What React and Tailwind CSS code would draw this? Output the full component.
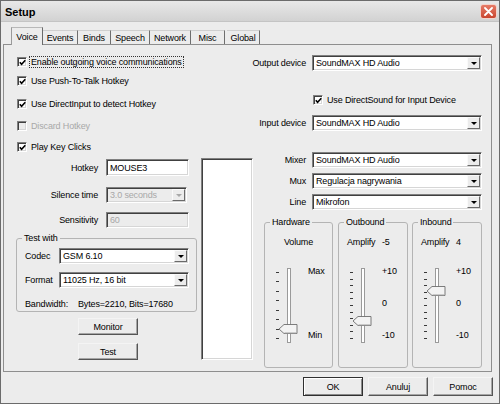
// Setup dialog (Voice tab) — XP silver style

const sunken =
  'border border-t-[#808080] border-l-[#808080] border-b-white border-r-white shadow-[inset_1px_1px_0_#404040,inset_-1px_-1px_0_#d6d6d6]'

function Check({ checked, disabled }) {
  return (
    <span
      className={`w-[10px] h-[10px] shrink-0 flex items-center justify-center ${sunken} ${
        disabled ? 'bg-[#ececec]' : 'bg-white'
      }`}
    >
      {checked && (
        <svg width="7" height="7" viewBox="0 0 7 7">
          <polyline points="0.8,3.2 2.6,5.3 6.3,1.2" fill="none" stroke="#000" strokeWidth="1.6" />
        </svg>
      )}
    </span>
  )
}

function CheckRow({ label, checked, disabled, focus, className = '' }) {
  return (
    <div className={`h-[14px] flex items-center ${className}`}>
      <Check checked={checked} disabled={disabled} />
      {focus ? (
        <span className="ml-[2px] px-px border border-dotted border-[#333] leading-[10px] whitespace-nowrap">
          {label}
        </span>
      ) : (
        <span className={`ml-[4px] whitespace-nowrap ${disabled ? 'text-[#a8a8a8]' : ''}`}>{label}</span>
      )}
    </div>
  )
}

function Field({ value, w, h = 'h-[16px]', disabled }) {
  return (
    <div
      className={`${w} ${h} flex items-center pl-[3px] ${sunken} ${
        disabled ? 'bg-[#ececec] text-[#a8a8a8]' : 'bg-white'
      }`}
    >
      {value}
    </div>
  )
}

function Combo({ value, w, disabled }) {
  return (
    <div
      className={`${w} h-[16px] flex items-stretch ${sunken} ${
        disabled ? 'bg-[#ececec] text-[#a8a8a8]' : 'bg-white'
      }`}
    >
      <span className="flex-1 pl-[3px] flex items-center whitespace-nowrap overflow-hidden">{value}</span>
      <span className="w-[13px] m-px flex items-center justify-center bg-[#ececec] border border-t-[#fafafa] border-l-[#fafafa] border-b-[#6a6a6a] border-r-[#6a6a6a]">
        <span
          className={`w-0 h-0 border-x-[3px] border-x-transparent border-t-[3px] ${
            disabled ? 'border-t-[#a8a8a8]' : 'border-t-black'
          }`}
        />
      </span>
    </div>
  )
}

function Btn({ children, className = '', def }) {
  return (
    <button
      className={`flex items-center justify-center bg-[#ececec] ${
        def
          ? 'border border-[#2f2f2f] shadow-[inset_1px_1px_0_#ffffff,inset_-1px_-1px_0_#8a8a8a]'
          : 'border border-t-[#f4f4f4] border-l-[#f4f4f4] border-b-[#555] border-r-[#555] shadow-[inset_-1px_-1px_0_#a6a6a6]'
      } ${className}`}
    >
      {children}
    </button>
  )
}

function Group({ title, className = '', children }) {
  return (
    <fieldset className={`border border-[#b4b4b4] rounded-[3px] ${className}`}>
      <legend className="ml-[5px] px-[2px] leading-[12px]">{title}</legend>
      {children}
    </fieldset>
  )
}

function LabeledCombo({ label, value = 'SoundMAX HD Audio', className = '' }) {
  return (
    <div className={`flex items-center ${className}`}>
      <span className="w-[52px] text-right whitespace-nowrap flex justify-end">{label}</span>
      <div className="ml-[6px]">
        <Combo value={value} w="w-[170px]" />
      </div>
    </div>
  )
}

function Slider({ ticks, thumb }) {
  const ys = Array.from({ length: ticks }, (_, i) => 7 + (i * 66) / (ticks - 1))
  const c = thumb
  return (
    <svg width="26" height="80" viewBox="0 0 26 80">
      {ys.map((y, i) => (
        <line key={i} x1="2" x2="5" y1={Math.round(y) + 0.5} y2={Math.round(y) + 0.5} stroke="#3a3a3a" strokeWidth="1" />
      ))}
      <rect x="13.5" y="3.5" width="3" height="74" fill="#ffffff" stroke="#9a9a9a" strokeWidth="1" />
      <polygon
        points={`5,${c} 10,${c - 4.5} 23,${c - 4.5} 23,${c + 4.5} 10,${c + 4.5}`}
        fill="#f3f3f3"
        stroke="#6e6e6e"
        strokeWidth="0.9"
      />
      <line x1="10.5" y1={c + 4} x2="22.5" y2={c + 4} stroke="#a0a0a0" strokeWidth="1" />
    </svg>
  )
}

function SliderGroup({ title, head, ticks, thumb, labels, className = '' }) {
  return (
    <Group title={title} className={className}>
      <div className="h-[131px]">
        {head}
        <div className="mt-[17px] flex pl-[9px]">
          <Slider ticks={ticks} thumb={thumb} />
          <div className="ml-[8px] h-[76px] flex flex-col justify-between">
            {labels.map((l) => (
              <span key={l} className="leading-[12px]">
                {l}
              </span>
            ))}
          </div>
        </div>
      </div>
    </Group>
  )
}

const tabs = [
  { name: 'Voice', w: 'w-[32px]', active: true },
  { name: 'Events', w: 'w-[35px]' },
  { name: 'Binds', w: 'w-[33px]' },
  { name: 'Speech', w: 'w-[39px]' },
  { name: 'Network', w: 'w-[41px]' },
  { name: 'Misc', w: 'w-[34px] mr-[2px]' },
  { name: 'Global', w: 'w-[33px]' },
]

export default function App() {
  return (
    <div className="w-[500px] h-[404px] border border-[#6b6b6b] bg-[#ececec] flex flex-col text-black text-[9px] leading-[12px] tracking-[-0.15px] font-['Liberation_Sans',Arial,sans-serif] overflow-hidden">
      {/* title bar */}
      <div className="h-[21px] shrink-0 flex justify-between pl-[4px] pr-[2px] bg-linear-to-b from-[#e8e8e8] to-[#d2d2d2] border-b border-b-[#c4c4c4]">
        <span className="mt-[5px] font-bold text-[11px] leading-[13px] tracking-normal">Setup</span>
        <span className="mt-[3px] w-[17px] h-[15px] rounded-[3px] bg-linear-to-b from-[#e67a66] to-[#c9452f] border border-[#f3d2cb] flex items-center justify-center">
          <svg width="9" height="9" viewBox="0 0 9 9">
            <path d="M1 1 L8 8 M8 1 L1 8" stroke="#fff" strokeWidth="1.8" strokeLinecap="round" />
          </svg>
        </span>
      </div>

      {/* tab strip */}
      <div className="h-[22px] shrink-0 flex items-end pl-[10px]">
        {tabs.map((t) =>
          t.active ? (
            <div
              key={t.name}
              className={`${t.w} h-[18px] -mb-px relative z-10 bg-[#ececec] flex items-center justify-center border-l border-t border-r border-l-[#9a9a9a] border-t-[#b8b8b8] border-r-[#6a6a6a]`}
            >
              {t.name}
            </div>
          ) : (
            <div
              key={t.name}
              className={`${t.w} h-[14px] pt-px flex items-center justify-center border-t border-r border-t-[#cfcfcf] border-r-[#6e6e6e]`}
            >
              {t.name}
            </div>
          )
        )}
      </div>

      {/* tab panel */}
      <div className="ml-[2px] w-[489px] h-[328px] shrink-0 border border-[#8e8e8e] flex pl-[12px]">
        {/* left column */}
        <div className="w-[181px] flex flex-col">
          <CheckRow className="mt-[10px] ml-px" label="Enable outgoing voice communications" checked focus />
          <CheckRow className="mt-[5px] ml-px" label="Use Push-To-Talk Hotkey" checked />
          <CheckRow className="mt-[9px] ml-px" label="Use DirectInput to detect Hotkey" checked />
          <CheckRow className="mt-[8px] ml-px" label="Discard Hotkey" disabled />
          <CheckRow className="mt-[7px] ml-px" label="Play Key Clicks" checked />

          <div className="mt-[5px] flex items-center">
            <span className="w-[82px] text-right">Hotkey</span>
            <div className="ml-[8px]">
              <Field value="MOUSE3" w="w-[83px]" h="h-[17px]" />
            </div>
          </div>
          <div className="mt-[11px] flex items-center">
            <span className="w-[82px] text-right">Silence time</span>
            <div className="ml-[8px]">
              <Combo value="3.0 seconds" w="w-[81px]" disabled />
            </div>
          </div>
          <div className="mt-[9px] flex items-center">
            <span className="w-[82px] text-right">Sensitivity</span>
            <div className="ml-[8px]">
              <Field value="60" w="w-[83px]" disabled />
            </div>
          </div>

          <Group title="Test with" className="mt-[4px] w-[181px]">
            <div className="pl-[8px] pb-px">
              <div className="mt-[4px] flex items-center">
                <span className="w-[34px]">Codec</span>
                <Combo value="GSM 6.10" w="w-[130px]" />
              </div>
              <div className="mt-[8px] flex items-center">
                <span className="w-[34px]">Format</span>
                <Combo value="11025 Hz, 16 bit" w="w-[130px]" />
              </div>
              <div className="mt-[10px] h-[12px] flex items-center">
                <span className="w-[53px]">Bandwidth:</span>
                <span>Bytes=2210, Bits=17680</span>
              </div>
            </div>
          </Group>

          <Btn className="mt-[6px] ml-[62px] w-[60px] h-[17px]">Monitor</Btn>
          <Btn className="mt-[8px] ml-[62px] w-[60px] h-[17px]">Test</Btn>
        </div>

        {/* list box */}
        <div className={`ml-[4px] mt-[113px] w-[52px] h-[202px] bg-white ${sunken}`} />

        {/* right column */}
        <div className="ml-px w-[228px] flex flex-col">
          <LabeledCombo label="Output device" className="mt-[10px]" />
          <CheckRow className="mt-[22px] pl-[59px]" label="Use DirectSound for Input Device" checked />
          <LabeledCombo label="Input device" className="mt-[8px]" />
          <LabeledCombo label="Mixer" className="mt-[21px]" />
          <LabeledCombo label="Mux" value="Regulacja nagrywania" className="mt-[5px]" />
          <LabeledCombo label="Line" value="Mikrofon" className="mt-[5px]" />

          <div className="mt-[6px] pl-[10px] flex">
            <SliderGroup
              title="Hardware"
              className="w-[69px]"
              head={<div className="mt-[8px] h-[12px] flex justify-center">Volume</div>}
              ticks={8}
              thumb={64}
              labels={['Max', 'Min']}
            />
            <SliderGroup
              title="Outbound"
              className="ml-[5px] w-[70px]"
              head={
                <div className="mt-[8px] h-[12px] flex pl-[8px]">
                  <span className="w-[35px]">Amplify</span>
                  <span>-5</span>
                </div>
              }
              ticks={11}
              thumb={56}
              labels={['+10', '0', '-10']}
            />
            <SliderGroup
              title="Inbound"
              className="ml-[4px] w-[70px]"
              head={
                <div className="mt-[8px] h-[12px] flex pl-[8px]">
                  <span className="w-[35px]">Amplify</span>
                  <span>4</span>
                </div>
              }
              ticks={11}
              thumb={26}
              labels={['+10', '0', '-10']}
            />
          </div>
        </div>
      </div>

      {/* dialog buttons */}
      <div className="mt-[5px] h-[19px] shrink-0 flex justify-end gap-[5px] pr-[6px]">
        <Btn def className="w-[60px] h-[19px]">
          OK
        </Btn>
        <Btn className="w-[60px] h-[19px]">Anuluj</Btn>
        <Btn className="w-[60px] h-[19px]">Pomoc</Btn>
      </div>
    </div>
  )
}
